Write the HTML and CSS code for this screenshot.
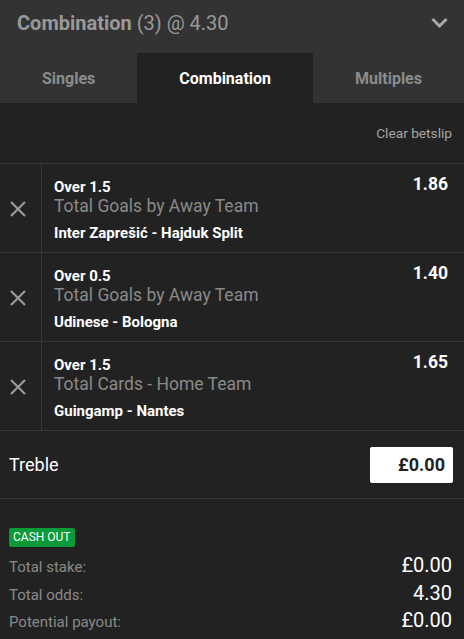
FILE: index.html
```html
<!DOCTYPE html>
<html lang="en">
<head>
<meta charset="utf-8">
<title>Betslip</title>
<link rel="stylesheet" href="styles.css">
</head>
<body>
<div class="slip">
  <header class="head">
    <div class="title"><b>Combination</b> (3) @ 4.30</div>
    <svg class="chev" width="17" height="11" viewBox="0 0 17 11"><path d="M1.5 2 L8.5 9 L15.5 2" fill="none" stroke="#a8a8a8" stroke-width="3"/></svg>
  </header>
  <nav class="tabs">
    <div class="tab">Singles</div>
    <div class="tab active">Combination</div>
    <div class="tab">Multiples</div>
  </nav>
  <div class="clear-row"><span class="clear">Clear betslip</span></div>
  <div class="bets">
    <div class="bet">
      <div class="remove"><svg width="16" height="16" viewBox="0 0 16 16"><path d="M1 1 L15 15 M15 1 L1 15" stroke="#9a9a9a" stroke-width="2.2"/></svg></div>
      <div class="info">
        <div class="top"><span class="sel">Over 1.5</span><span class="odds">1.86</span></div>
        <div class="market">Total Goals by Away Team</div>
        <div class="event">Inter Zaprešić - Hajduk Split</div>
      </div>
    </div>
    <div class="bet">
      <div class="remove"><svg width="16" height="16" viewBox="0 0 16 16"><path d="M1 1 L15 15 M15 1 L1 15" stroke="#9a9a9a" stroke-width="2.2"/></svg></div>
      <div class="info">
        <div class="top"><span class="sel">Over 0.5</span><span class="odds">1.40</span></div>
        <div class="market">Total Goals by Away Team</div>
        <div class="event">Udinese - Bologna</div>
      </div>
    </div>
    <div class="bet">
      <div class="remove"><svg width="16" height="16" viewBox="0 0 16 16"><path d="M1 1 L15 15 M15 1 L1 15" stroke="#9a9a9a" stroke-width="2.2"/></svg></div>
      <div class="info">
        <div class="top"><span class="sel">Over 1.5</span><span class="odds">1.65</span></div>
        <div class="market">Total Cards - Home Team</div>
        <div class="event">Guingamp - Nantes</div>
      </div>
    </div>
  </div>
  <div class="stake">
    <span class="stake-label">Treble</span>
    <div class="stake-input">£0.00</div>
  </div>
  <div class="summary">
    <span class="cashout">CASH OUT</span>
    <div class="line"><span class="lbl">Total stake:</span><span class="val">£0.00</span></div>
    <div class="line"><span class="lbl">Total odds:</span><span class="val">4.30</span></div>
    <div class="line"><span class="lbl">Potential payout:</span><span class="val">£0.00</span></div>
  </div>
</div>
</body>
</html>
```

FILE: styles.css
```css
html, body {
  margin: 0;
  padding: 0;
  background: #222222;
}
body {
  font-family: Roboto, "Liberation Sans", Arial, sans-serif;
  color: #ffffff;
}
.slip {
  width: 464px;
  min-height: 639px;
  background: #222222;
}
.head {
  height: 53px;
  background: #333333;
  display: flex;
  align-items: center;
  justify-content: space-between;
  padding: 0 16px 0 17px;
}
.title {
  font-size: 20px;
  color: #999999;
  margin-top: -7px;
}
.title b {
  font-weight: 700;
}
.chev {
  display: block;
  margin-top: -8px;
}
.tabs {
  display: flex;
  height: 50px;
  background: #333333;
}
.tab {
  flex: 1 1 auto;
  display: flex;
  align-items: center;
  justify-content: center;
  font-size: 16px;
  font-weight: 700;
  color: #8c8c8c;
  padding-top: 1px;
}
.tab.active {
  background: #222222;
  color: #ffffff;
}
.clear-row {
  height: 60px;
  display: flex;
  justify-content: flex-end;
  align-items: center;
  padding-right: 12px;
  border-bottom: 1px solid #373737;
}
.clear {
  font-size: 13.7px;
  color: #a6a6a6;
  margin-top: -1px;
}
.bet {
  display: flex;
  height: 88px;
  border-bottom: 1px solid #373737;
}
.remove {
  width: 41px;
  border-right: 1px solid #373737;
  display: flex;
  align-items: center;
  justify-content: center;
  padding-top: 2px;
}
.remove svg {
  display: block;
  margin-left: -5px;
}
.info {
  flex: 1;
  padding: 11px 16px 0 12px;
}
.top {
  display: flex;
  justify-content: space-between;
  align-items: flex-start;
}
.sel {
  font-size: 15px;
  line-height: 15px;
  font-weight: 700;
  margin-top: 5px;
}
.odds {
  font-size: 17.5px;
  line-height: 18px;
  font-weight: 700;
}
.market {
  font-size: 17.5px;
  line-height: 18px;
  color: #8a8a8a;
  margin-top: 2px;
}
.event {
  font-size: 15px;
  line-height: 15px;
  font-weight: 700;
  margin-top: 11px;
}
.stake {
  height: 67px;
  display: flex;
  align-items: center;
  justify-content: space-between;
  padding: 0 11px 0 9px;
  border-bottom: 1px solid #373737;
}
.stake-label {
  font-size: 18px;
  color: #ffffff;
}
.stake-input {
  width: 83px;
  height: 36px;
  box-sizing: border-box;
  background: #ffffff;
  border-radius: 2px;
  color: #222222;
  font-size: 18px;
  font-weight: 700;
  display: flex;
  align-items: center;
  justify-content: flex-end;
  padding-right: 8px;
}
.summary {
  padding: 27px 12px 0 9px;
}
.cashout {
  display: inline-block;
  background: #0a9a3a;
  color: #ffffff;
  font-size: 12px;
  line-height: 19px;
  padding: 0 4px;
  border-radius: 2px;
  margin-bottom: 6px;
}
.line {
  display: flex;
  justify-content: space-between;
  align-items: baseline;
  height: 27.5px;
}
.lbl {
  font-size: 15px;
  color: #8a8a8a;
}
.val {
  font-size: 20px;
  color: #ffffff;
}
```
